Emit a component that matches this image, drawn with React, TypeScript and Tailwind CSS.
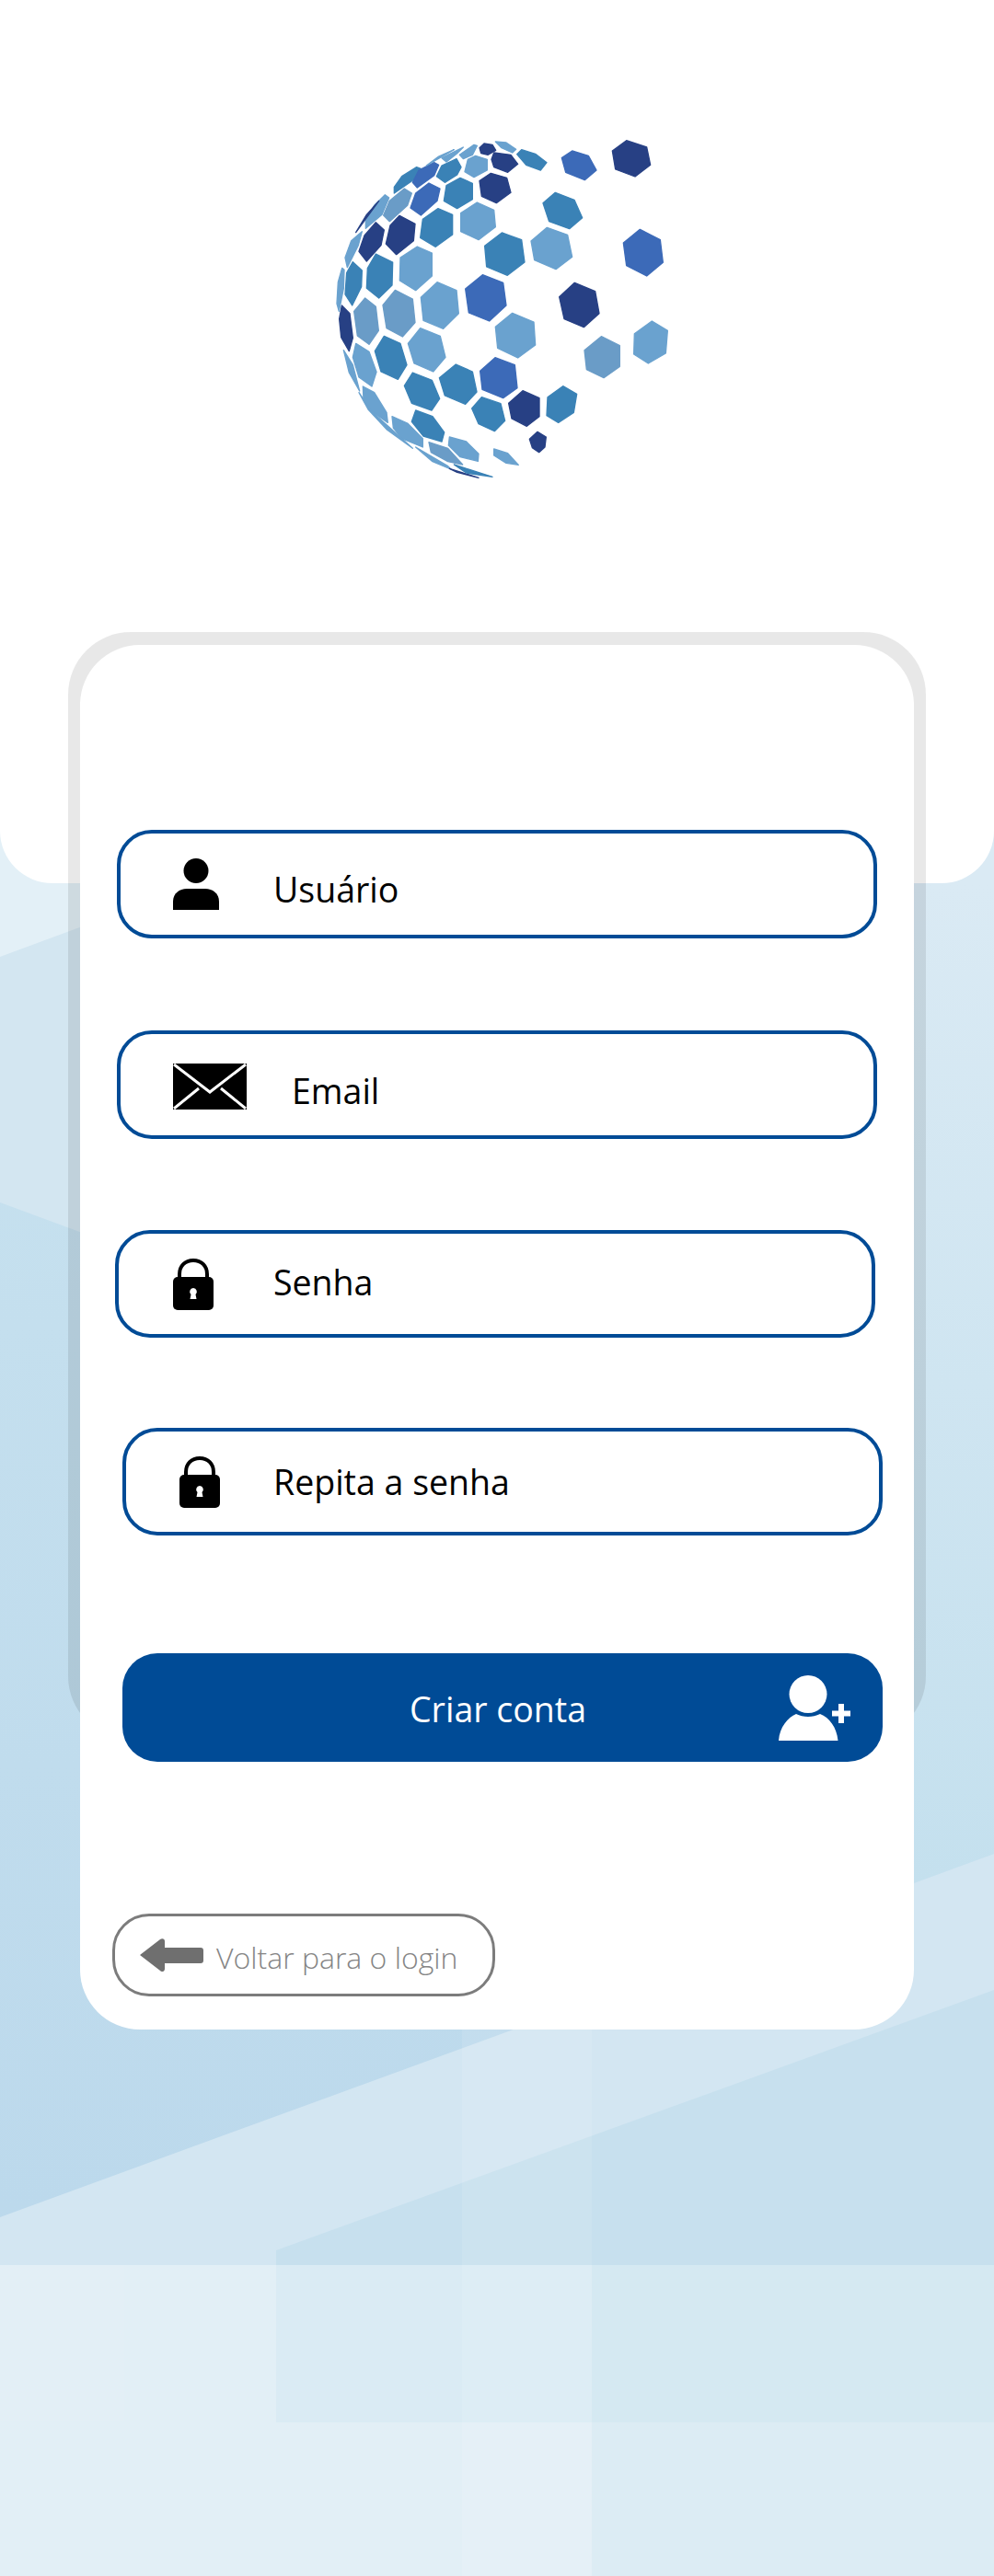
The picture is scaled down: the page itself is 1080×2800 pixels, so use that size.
import React from 'react';

const NAVY = '#274084';
const BLUE = '#3c6ab8';
const MID = '#3a82b6';
const LIGHT = '#6aa2cf';
const GREY = '#6a9cc7';

// logo cells, traced at 3x so the coordinates stay whole numbers
const CELLS: [string, string][] = [
  [NAVY, '1022,68 1088,90 1100,148 1050,186 986,162 976,102'],
  [BLUE, '845,102 898,118 924,165 886,197 824,172 811,125'],
  [MID, '790,238 852,262 878,320 836,356 770,332 750,272'],
  [LIGHT, '763,352 830,376 845,448 792,488 722,458 711,396'],
  [BLUE, '1066,358 1132,392 1141,466 1088,510 1022,476 1012,402'],
  [NAVY, '853,532 920,560 933,632 883,677 819,650 803,578'],
  [GREY, '940,707 1000,737 1000,805 948,842 892,815 885,752'],
  [LIGHT, '1105,657 1156,688 1150,762 1093,795 1046,765 1048,698'],
  [MID, '616,369 680,392 690,465 634,508 566,480 560,412'],
  [BLUE, '553,506 620,532 630,606 575,657 508,630 497,552'],
  [LIGHT, '650,631 720,660 725,735 668,777 602,745 595,676'],
  [BLUE, '594,776 658,800 666,875 620,908 552,880 545,820'],
  [NAVY, '684,884 738,908 738,968 697,1000 648,975 638,925'],
  [MID, '815,869 860,895 850,955 800,988 762,965 765,905'],
  [NAVY, '732,1018 760,1035 756,1068 737,1085 715,1070 706,1042'],
  [LIGHT, '590,1074 635,1088 670,1126 630,1120 590,1095'],
  [MID, '466,798 520,822 534,888 497,928 430,900 412,842'],
  [MID, '550,905 612,926 626,982 592,1016 540,992 518,942'],
  [LIGHT, '445,1035 500,1050 540,1090 538,1114 480,1100 442,1062'],
  [MID, '335,948 390,968 428,1020 420,1050 360,1032 322,985'],
  [MID, '325,825 388,850 413,910 387,948 322,925 298,868'],
  [LIGHT, '350,680 415,706 432,775 392,822 330,795 310,730'],
  [MID, '232,706 285,730 306,800 277,847 222,822 202,755'],
  [LIGHT, '405,530 468,557 475,632 425,682 360,655 352,580'],
  [GREY, '268,556 325,585 333,662 292,708 240,680 228,605'],
  [GREY, '170,582 205,610 214,688 183,733 145,705 134,625'],
  [LIGHT, '140,730 183,757 207,823 192,870 150,840 130,775'],
  [NAVY, '94,606 120,632 130,712 118,755 92,710 86,650'],
  [LIGHT, '100,752 130,800 152,885 118,825'],
  [LIGHT, '163,870 200,890 240,955 244,988 190,950 165,915'],
  [LIGHT, '258,968 308,990 358,1040 358,1068 290,1040 262,1005'],
  [GREY, '378,1052 440,1072 488,1125 440,1115 385,1085'],
  [LIGHT, '335,1068 440,1130 450,1140 390,1115'],
  [LIGHT, '150,890 190,950 240,995 325,1072 240,1010 180,945'],
  [NAVY, '445,1138 540,1168 470,1150'],
  [MID, '460,1125 585,1165 500,1152'],
  [LIGHT, '160,365 148,410 112,482 105,450 125,395'],
  [MID, '130,464 160,492 158,545 128,606 105,570 110,500'],
  [LIGHT, '95,484 102,490 100,550 85,625 78,600 82,530'],
  [MID, '205,438 260,465 258,540 215,582 175,550 178,485'],
  [LIGHT, '340,414 388,435 388,510 335,557 283,525 285,450'],
  [NAVY, '205,335 232,360 222,410 175,462 150,430 168,378'],
  [NAVY, '282,313 333,340 328,395 272,440 238,405 252,345'],
  [MID, '408,290 455,310 455,375 400,415 350,385 358,325'],
  [LIGHT, '535,270 590,295 595,350 540,392 482,365 482,305'],
  [NAVY, '580,175 632,190 645,238 598,272 550,250 543,200'],
  [MID, '480,190 520,208 520,260 470,290 427,265 435,215'],
  [BLUE, '378,207 414,225 405,265 352,312 318,288 335,240'],
  [GREY, '298,225 322,240 308,280 250,332 230,312 250,265'],
  [LIGHT, '235,245 248,255 225,310 172,355 172,330 200,280'],
  [NAVY, '215,265 140,368 175,310'],
  [MID, '338,155 352,160 330,195 265,240 265,220 290,185'],
  [BLUE, '395,140 410,148 395,182 340,222 325,205 345,165'],
  [MID, '468,128 483,155 470,180 430,205 403,185 420,150'],
  [LIGHT, '530,118 568,130 568,165 525,188 495,170 505,130'],
  [NAVY, '590,108 645,115 668,145 635,172 590,155 582,130'],
  [NAVY, '558,78 585,82 596,100 570,115 548,110 543,92'],
  [LIGHT, '595,72 630,75 662,97 650,108 615,92'],
  [MID, '680,98 725,112 762,140 742,165 695,148 665,113'],
  [LIGHT, '525,82 535,85 520,115 490,128 478,115'],
  [LIGHT, '490,90 470,110 435,138 420,125'],
  [LIGHT, '460,98 370,150 410,120'],
];

function Logo() {
  return (
    <svg width="400" height="410" viewBox="0 0 1200 1230">
      {CELLS.map(([fill, points]) => (
        <polygon key={points} fill={fill} stroke={fill} strokeWidth="4" strokeLinejoin="round" points={points} />
      ))}
    </svg>
  );
}

function Backdrop() {
  return (
    <svg className="absolute inset-0" width="1080" height="2800" viewBox="0 0 1080 2800">
      <defs>
        <linearGradient id="base" x1="0" y1="960" x2="0" y2="2400" gradientUnits="userSpaceOnUse">
          <stop offset="0" stopColor="#c8e2ef" />
          <stop offset="1" stopColor="#bcd9ec" />
        </linearGradient>
        <linearGradient id="right" x1="0" y1="960" x2="0" y2="2047" gradientUnits="userSpaceOnUse">
          <stop offset="0" stopColor="#daeaf4" />
          <stop offset="1" stopColor="#c4e0ee" />
        </linearGradient>
      </defs>
      <rect x="0" y="900" width="1080" height="1900" fill="url(#base)" />
      <polygon points="0,900 100,900 100,1344 0,1307" fill="#d3e6f1" />
      <polygon points="0,900 100,900 100,1003 0,1040" fill="#e3f0f7" />
      <polygon points="985,900 1080,900 1080,2015 985,2050" fill="url(#right)" />
      <polygon points="0,2410 1080,2015 1080,2800 0,2800" fill="#d3e6f2" />
      <polygon points="300,2446 1080,2163 1080,2633 300,2633" fill="#c7e0ee" />
      <rect x="0" y="2462" width="1080" height="338" fill="#ffffff" fillOpacity="0.35" />
      <rect x="0" y="2462" width="135" height="170" fill="#ffffff" fillOpacity="0.05" />
      <rect x="502" y="2206" width="141" height="594" fill="#ffffff" fillOpacity="0.1" />
      <rect x="643" y="2462" width="437" height="338" fill="#8fc4e2" fillOpacity="0.06" />
    </svg>
  );
}

function UserIcon() {
  return (
    <svg width="50" height="56" viewBox="0 0 50 56">
      <circle cx="25" cy="13.5" r="13.5" fill="#000" />
      <path d="M0 56V47C0 38 7 33 15 33H35C43 33 50 38 50 47V56Z" fill="#000" />
    </svg>
  );
}

function MailIcon() {
  return (
    <svg width="80" height="50" viewBox="0 0 80 50">
      <rect width="80" height="50" fill="#000" />
      <path d="M1 1L40 31L79 1M1 49L28 27M79 49L52 27" fill="none" stroke="#fff" strokeWidth="3" />
    </svg>
  );
}

function LockIcon() {
  return (
    <svg width="44" height="56" viewBox="0 0 44 56">
      <path d="M7 22V17C7 8 13 2 22 2C31 2 37 8 37 17V22" fill="none" stroke="#000" strokeWidth="4" />
      <rect x="0" y="20" width="44" height="36" rx="5" fill="#000" />
      <path d="M22 32A4 4 0 0 1 24.500 39L25.500 44H18.500L19.500 39A4 4 0 0 1 22 32Z" fill="#fff" />
    </svg>
  );
}

function UserPlusIcon() {
  return (
    <svg width="78" height="71" viewBox="0 0 78 71">
      <circle cx="32" cy="20.500" r="20.500" fill="#fff" />
      <path d="M0 71C1 56 10 46 19 42C27 46 37 46 45 42C55 46 63 56 64.500 71Z" fill="#fff" />
      <path d="M58 41.500H78M68 31V52" stroke="#fff" strokeWidth="6" />
    </svg>
  );
}

function ArrowIcon() {
  return (
    <svg width="69" height="36" viewBox="0 0 69 36">
      <path
        d="M0 18L22 1C24 -0.5 27 0 27 3V10H66C68 10 69 11 69 13V24C69 26 68 27 66 27H27V33C27 36 24 37 22 35Z"
        fill="#6f6f6f"
      />
    </svg>
  );
}

interface FieldProps {
  label: string;
  icon: React.ReactNode;
  className: string;
  iconClass: string;
  textClass: string;
}

function Field({ label, icon, className, iconClass, textClass }: FieldProps) {
  return (
    <div className={`flex items-center w-[826px] bg-white border-[4px] border-[#004b96] rounded-[38px] ${className}`}>
      <div className={`flex shrink-0 ${iconClass}`}>{icon}</div>
      <span className={`text-[37.5px] leading-[48px] text-black ${textClass}`}>{label}</span>
    </div>
  );
}

export default function App() {
  return (
    <div className="relative w-[1080px] h-[2800px] overflow-hidden font-['Open_Sans',sans-serif]">
      <Backdrop />

      {/* Top panel with the logo */}
      <div className="relative h-[960px] bg-white rounded-b-[57px] pl-[340px] pt-[130px]">
        <Logo />
      </div>

      {/* Gray frame behind the form */}
      <div className="relative mt-[-273px] ml-[74px] w-[932px] h-[1203px] rounded-[68px] bg-black/[0.09] pt-[14px] pl-[13px]">
        <div className="w-[906px] h-[1505px] rounded-[65px] bg-white pt-[201px] flex flex-col">
          <Field
            label="Usuário"
            icon={<UserIcon />}
            className="h-[118px] ml-[40px]"
            iconClass="ml-[57px] mr-[59px]"
            textClass="pt-[12px]"
          />
          <Field
            label="Email"
            icon={<MailIcon />}
            className="h-[118px] ml-[40px] mt-[100px]"
            iconClass="ml-[57px] mr-[49px] mt-[4px]"
            textClass="pt-[14px]"
          />
          <Field
            label="Senha"
            icon={<LockIcon />}
            className="h-[117px] ml-[38px] mt-[99px]"
            iconClass="ml-[59px] mr-[65px]"
            textClass="pb-[3px]"
          />
          <Field
            label="Repita a senha"
            icon={<LockIcon />}
            className="h-[117px] ml-[46px] mt-[98px]"
            iconClass="ml-[58px] mr-[58px]"
            textClass="pt-[1px]"
          />

          <div className="flex items-center justify-between ml-[46px] mt-[128px] w-[826px] h-[118px] rounded-[38px] bg-[#004b96] pl-[312px] pr-[35px]">
            <span className="text-[37.5px] leading-[48px] text-white pt-[3px]">Criar conta</span>
            <UserPlusIcon />
          </div>

          <div className="flex items-center ml-[35px] mt-[165px] w-[416px] h-[90px] rounded-[40px] bg-white border-[3px] border-[#7c7c7c] pl-[27px]">
            <ArrowIcon />
            <span className="ml-[14px] pt-[6px] text-[32px] leading-[44px] font-light text-[#858585]">Voltar para o login</span>
          </div>
        </div>
      </div>
    </div>
  );
}
